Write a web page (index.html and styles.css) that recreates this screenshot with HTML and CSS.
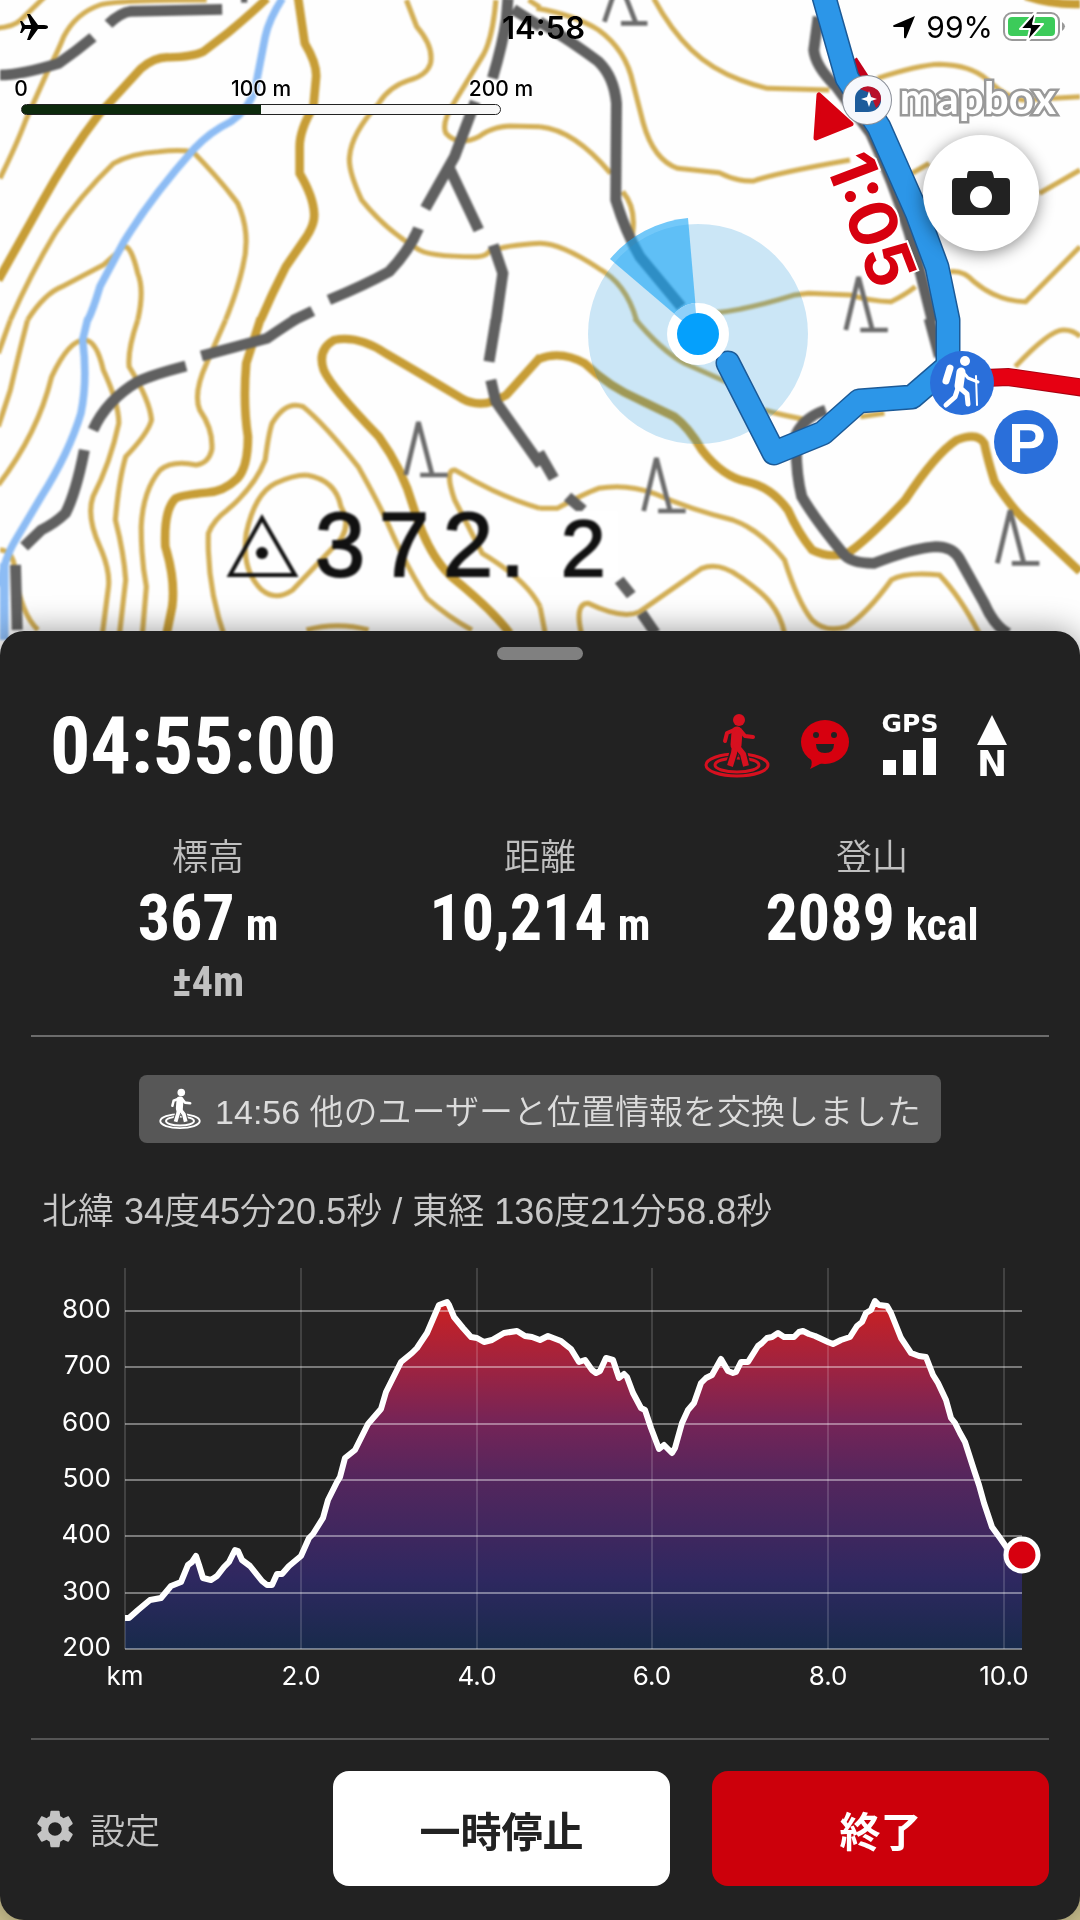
FILE: index.html
```
<!DOCTYPE html>
<html lang="ja">
<head>
    <meta charset="UTF-8">
    <meta name="viewport" content="width=device-width, initial-scale=1.0">
    <title>登山記録</title>
    <link rel="stylesheet" href="styles.css">
</head>
<body>
    <!-- Shared icons -->
    <svg class="defs" width="0" height="0" aria-hidden="true">
        <symbol id="walker" viewBox="0 0 66 64">
            <g fill="none" stroke="currentColor">
                <ellipse cx="33" cy="51" rx="31" ry="11" stroke-width="3"/>
                <ellipse cx="33" cy="51" rx="22" ry="7" stroke-width="3"/>
            </g>
            <g fill="none" stroke="var(--cut)" stroke-linejoin="round" stroke-width="9">
                <path d="M31 32 L30 39 L26 51"/>
                <path d="M33 32 L39 39 L42 51"/>
            </g>
            <circle cx="35" cy="6" r="6" fill="currentColor"/>
            <g fill="none" stroke="currentColor" stroke-linejoin="round">
                <path d="M33 18 L32 31" stroke-width="11" stroke-linecap="round"/>
                <path d="M30 16 L23 19 L21 27" stroke-width="4" stroke-linecap="round"/>
                <path d="M36 16 L41 22 L49 23" stroke-width="4" stroke-linecap="round"/>
                <path d="M31 32 L30 39 L26 52" stroke-width="6"/>
                <path d="M31 30 L39 40 L42 52" stroke-width="6"/>
            </g>
        </symbol>
    </svg>

    <main class="app">
        <section class="map">
            <svg class="map-canvas" viewBox="0 0 1080 660" aria-label="地図">
                <defs>
                    <path id="tree" d="M-37 165 L0 6 L40 165 M5 165 H85"/>
                </defs>

                <g class="tiles">
                    <!-- Tile: top left -->
                    <g transform="scale(.3444 .3333)" fill="none">
                        <path class="contour" d="M-10 85 Q40 80 60 60 L130 -10"/>
                        <path class="contour" d="M0 535 Q50 430 75 360 L140 210 Q170 150 185 110 Q220 40 290 15 Q330 0 600 0"/>
                        <path class="contour bold" d="M-5 840 L120 610 Q200 460 290 340 L410 205 Q450 170 490 172 Q560 170 590 155 L660 100 Q730 40 775 -5"/>
                        <path class="contour" d="M30 960 Q90 820 160 700 Q230 590 330 490 Q380 460 460 455 Q520 448 560 455 Q640 540 690 610 Q730 700 705 800 Q690 870 655 960"/>
                        <path class="contour" d="M80 960 Q130 880 180 860 L300 795 L360 740 Q380 735 400 820 Q420 870 400 960"/>
                        <path class="contour bold" d="M865 -10 L885 130 Q920 190 918 230 L910 320 Q870 390 870 440 L870 520 Q910 590 912 640 Q915 670 890 710 L830 800 Q790 880 757 960"/>
                        <path class="contour" d="M1180 0 L1210 80 Q1260 140 1250 190 Q1240 225 1190 240 Q1130 260 1100 310 Q1020 400 1015 470 Q1010 510 1050 600 Q1120 690 1210 745 Q1240 770 1380 770 Q1410 770 1420 755 Q1470 735 1568 730"/>
                        <path class="contour" d="M1440 0 Q1430 120 1400 170 L1320 305 Q1280 370 1295 400 Q1330 440 1390 410 Q1430 380 1480 378 L1568 380"/>
                        <path class="contour" d="M1535 0 L1568 22"/>
                        <path class="river" d="M820 -5 Q780 60 770 110 L740 270 Q720 330 670 365 Q610 395 565 445 Q440 590 360 725 L290 860 Q270 930 255 960"/>
                        <path class="road" d="M0 225 Q60 225 170 190 Q220 155 270 112 M315 72 Q350 38 380 34 L645 28"/>
                        <path class="road" d="M1475 -5 L1470 60 Q1460 130 1430 235 M1380 305 L1320 470 L1235 625 M1215 685 Q1190 750 1130 815 Q1060 855 955 900 M908 933 L850 962"/>
                        <path class="road" d="M1305 505 L1390 690 M1432 735 L1460 820 L1440 965 M1490 28 L1570 80"/>
                        <path class="road" d="M700 -8 H718"/>
                    </g>

                    <!-- Tile: top right -->
                    <g transform="translate(540 0) scale(.3444 .3333)" fill="none">
                        <path class="contour" d="M-10 25 Q100 45 170 90 Q250 150 270 250 L300 370 Q330 480 400 505 L520 518 Q570 545 620 543 Q680 520 900 480 M1080 520 L1130 490"/>
                        <path class="contour" d="M330 -5 Q380 90 440 150 Q520 230 660 265 L840 270 M980 235 Q1100 195 1160 193 Q1250 195 1300 240 Q1350 290 1400 300 L1568 290"/>
                        <path class="contour" d="M0 380 Q100 390 205 520"/>
                        <path class="contour" d="M240 575 Q285 630 265 720"/>
                        <path class="contour" d="M0 730 Q60 730 170 805 Q250 850 280 960"/>
                        <path class="contour" d="M500 940 Q600 930 740 885 L780 880 L900 885 Q960 905 1020 905 Q1060 885 1090 860 M1190 815 Q1230 810 1260 845 Q1330 905 1410 905 L1568 740"/>
                        <path class="contour" d="M1450 580 L1568 510"/>
                        <path class="contour bold" d="M1410 -12 Q1490 15 1568 12"/>
                        <path class="road" d="M-2 65 Q100 130 170 185 Q215 230 222 310 L220 600 Q250 700 290 770 L410 920"/>
                        <path class="road" d="M808 50 L795 150 Q800 200 860 260 L960 400 Q1050 600 1100 800 L1140 965"/>
                        <path class="symbol" d="M187 65 L215 -20 M245 -20 L278 68 M235 70 H312"/>
                        <use href="#tree" class="symbol" x="925" y="825"/>
                    </g>

                    <!-- Tile: bottom left -->
                    <g transform="translate(0 320) scale(.3444 .3333)" fill="none">
                        <path class="contour" d="M30 0 L-5 100 M80 0 Q50 120 30 210 L-5 320"/>
                        <path class="contour" d="M-5 495 Q110 340 150 170 Q200 60 245 60 Q280 60 300 150 Q345 250 345 310 Q320 430 270 530 Q250 590 290 680 Q320 750 315 800 L295 960"/>
                        <path class="contour" d="M400 0 Q370 90 375 140 Q435 240 440 300 Q430 340 365 410 Q345 480 335 600 Q360 700 365 780 L345 960"/>
                        <path class="contour" d="M655 0 L600 130 Q560 220 580 270 Q620 330 615 390 Q605 430 570 435 Q500 420 465 450 Q415 510 410 620 Q410 720 425 800 L412 960"/>
                        <path class="contour bold" d="M757 -5 L715 130 Q705 250 720 350 Q720 440 690 475 Q650 515 600 518 Q530 525 510 535 Q475 570 480 680 Q510 780 500 860 L480 960"/>
                        <path class="contour" d="M655 960 Q600 800 605 640 Q620 600 660 570 Q740 500 770 420 Q780 340 790 310 Q830 240 880 260 Q940 310 1040 440 Q1100 550 1130 620 Q1190 760 1240 835 Q1300 890 1370 930"/>
                        <path class="contour" d="M890 465 Q975 480 990 560 Q1030 630 960 690 L850 810 Q800 845 760 810 Q700 750 715 640 Q740 520 800 490 Q850 465 890 465"/>
                        <path class="contour bold" d="M1570 110 L1470 225 Q1400 270 1340 235 Q1220 160 1120 100 Q1040 45 970 60 Q920 90 940 150 Q960 200 1100 350 Q1170 450 1200 560 Q1240 700 1310 770 Q1430 870 1480 940"/>
                        <path class="contour" d="M1568 565 Q1450 530 1320 450 Q1290 450 1320 540 Q1370 640 1400 700 Q1530 780 1568 860"/>
                        <path class="contour" d="M890 930 Q980 905 1070 930 M0 690 Q40 690 45 760 Q60 880 110 930"/>
                        <path class="river" d="M255 -5 L240 60 Q255 180 235 280 Q200 400 120 530 L45 660 Q10 720 0 800"/>
                        <path class="river pale" d="M12 730 L12 960"/>
                        <path class="road" d="M858 -2 Q810 30 775 55 L585 108 M540 138 Q440 165 400 185 Q310 240 270 330 M245 390 Q220 520 190 580 Q160 610 120 630 L70 680 M45 735 L50 930"/>
                        <path class="road" d="M1440 0 L1420 125 M1425 180 L1440 245 L1570 435"/>
                        <use href="#tree" class="symbol" x="1215" y="300"/>
                    </g>

                    <!-- Tile: bottom right -->
                    <g transform="translate(540 320) scale(.3444 .3333)" fill="none">
                        <path class="contour" d="M275 -5 Q350 90 420 130 L550 190 M650 270 Q720 290 780 300 M930 290 L1000 280"/>
                        <path class="contour bold" d="M-3 117 Q60 90 130 130 Q200 200 290 240 L390 290 Q430 320 470 390 Q530 470 600 485 Q670 500 720 570 Q750 640 790 690 Q850 720 900 695 Q960 650 1060 540 Q1150 400 1210 360 Q1270 335 1290 370 Q1300 420 1320 485 Q1380 580 1420 610 L1568 755"/>
                        <path class="contour" d="M0 565 L50 565 Q130 520 170 505 Q250 490 330 520 Q440 570 560 600 Q640 630 710 720 Q750 850 790 900 Q830 940 890 920 Q950 880 1020 780 Q1060 755 1160 765 Q1220 830 1275 940"/>
                        <path class="contour" d="M120 940 Q100 850 140 850 Q240 900 290 875 L470 745 Q520 725 580 770 Q650 820 670 850 Q700 890 710 940 M0 860 L15 940"/>
                        <path class="contour" d="M1380 140 Q1480 30 1520 30 Q1550 30 1568 50"/>
                        <path class="road" d="M-3 398 L40 475 M80 530 L125 570 M230 780 L265 825 M295 880 L335 940"/>
                        <path class="road" d="M830 270 Q770 290 745 340 Q740 450 760 530 Q800 600 880 700 Q900 730 970 730 Q1080 685 1150 680 Q1200 680 1220 720 L1290 850 Q1320 920 1360 940 M1130 -5 L1160 110"/>
                        <use href="#tree" class="symbol" x="338" y="408"/>
                        <use href="#tree" class="symbol" x="1365" y="565"/>
                    </g>

                    <!-- Summit -->
                    <path d="M262 518 L230 575 H295 Z" fill="none" stroke="#111" stroke-width="4"/>
                    <circle cx="262" cy="553" r="6" fill="#111"/>
                    <rect x="530" y="511" width="88" height="66" fill="#fff"/>
                    <text class="summit" x="315 379 443 500" y="576">372.</text>
                    <text class="summit small" x="561" y="576">2</text>
                </g>

                <!-- Current position -->
                <circle cx="698" cy="334" r="110" fill="#0087d7" fill-opacity=".2"/>
                <path d="M698 334 L610 259 A116 116 0 0 1 688 218 Z" fill="#1ca6f5" fill-opacity=".62"/>

                <!-- Course and walked track -->
                <path d="M853 60 L866 80" fill="none" stroke="#c1001a" stroke-width="9"/>
                <path d="M985 378 L1008 377 L1085 388" fill="none" stroke="#a90010" stroke-width="18"/>
                <path d="M985 378 L1008 377 L1085 388" fill="none" stroke="#e60012" stroke-width="16"/>
                <path d="M819 95 L816 138 L851 124 Z" fill="#d7000f" stroke="#d7000f" stroke-width="5" stroke-linejoin="round"/>
                <g fill="none" stroke-linejoin="round" stroke-linecap="round">
                    <path stroke="#1c5a97" stroke-width="25" d="M822 -10 L847 78 L879 127 L917 213 L937 267 L948 320 V366 L912 397 L859 401 L823 433 L774 453 L728 363"/>
                    <path stroke="#2c96e8" stroke-width="22" d="M822 -10 L847 78 L879 127 L917 213 L937 267 L948 320 V366 L912 397 L859 401 L823 433 L774 453 L728 363"/>
                </g>
                <text class="course-time" transform="translate(825 164) rotate(69)">1:05</text>
                <circle cx="698" cy="334" r="31" fill="#fff"/>
                <path d="M698 334 L674 314 A31 31 0 0 1 695 303 Z" fill="#8ed0f9"/>
                <circle cx="698" cy="334" r="21" fill="#05a0fc"/>

                <!-- Trailhead and parking -->
                <circle cx="962" cy="383" r="32" fill="#2a6fda"/>
                <g stroke="#fff" fill="none" stroke-linecap="round" stroke-linejoin="round">
                    <circle cx="965" cy="361" r="5" fill="#fff" stroke="none"/>
                    <path d="M950 368 L946 381" stroke-width="7"/>
                    <path d="M961 372 L959 386" stroke-width="9"/>
                    <path d="M958 388 L955 397 L946 405" stroke-width="5"/>
                    <path d="M959 387 L967 394 L968 404" stroke-width="5"/>
                    <path d="M962 371 L968 378 L978 382" stroke-width="3"/>
                    <path d="M976 376 L977 405" stroke-width="2"/>
                </g>
                <circle cx="1026" cy="442" r="32" fill="#2a6fda"/>
                <text class="parking" x="1027" y="462">P</text>
            </svg>

            <div class="map-overlay">
                <header class="status-bar">
                    <svg width="28" height="28" viewBox="0 0 28 28" aria-label="機内モード"><path d="M28 14 Q28 12 24 12 H18 L10 1 H7 L11 12 H5 L2 8 H0 L2 14 L0 20 H2 L5 16 H11 L7 27 H10 L18 16 H24 Q28 16 28 14 Z"/></svg>
                    <time class="clock">14:58</time>
                    <div class="power">
                        <svg width="24" height="24" viewBox="0 0 24 24" aria-label="位置情報"><path d="M23 1 L14 23 Q12 24 12 22 V13 Q12 12 11 12 H2 Q0 11 2 10 Z"/></svg>
                        <span>99%</span>
                        <svg class="battery" width="64" height="32" viewBox="0 0 64 32" aria-label="充電中">
                            <rect x="1" y="2" width="55" height="27" rx="8" fill="#fff" stroke="#999" stroke-width="2"/>
                            <rect x="5" y="6" width="47" height="19" rx="4" fill="#3ccb5a"/>
                            <path d="M59 11 Q65 15 59 20 Z" fill="#999"/>
                            <path d="M33 0 L17 18 H27 L24 31 L40 13 H30 Z" stroke="#fff" stroke-width="2" stroke-linejoin="round"/>
                        </svg>
                    </div>
                </header>

                <div class="map-tools">
                    <div class="scale">
                        <div class="scale-labels"><span>0</span><span>100 m</span><span>200 m</span></div>
                        <div class="scale-bar"></div>
                    </div>
                    <div class="right-tools">
                        <a class="mapbox" href="#">
                            <svg width="50" height="50" viewBox="0 0 50 50" aria-hidden="true">
                                <circle cx="25" cy="25" r="24" fill="#f6f8fc" stroke="#8a8f98" stroke-width="2"/>
                                <path d="M13 37 V25 A12 12 0 0 1 25 12 A13 12 0 0 1 39 24 A13 12 0 0 1 25 37 Z" fill="#1d5c9b"/>
                                <path d="M18 14 A13 12 0 0 1 39 24 Q38 30 34 33 L28 18 Z" fill="#b8112a"/>
                                <path d="M27 16 L29 22 L35 24 L29 26 L27 32 L25 26 L19 24 L25 22 Z" fill="#fff"/>
                            </svg>
                            <span>mapbox</span>
                        </a>
                        <button class="camera" type="button" aria-label="写真を撮る">
                            <svg width="60" height="46" viewBox="0 0 60 46"><path fill="#222" fill-rule="evenodd" d="M18 1 H40 Q42 1 43 8 H55 Q59 8 59 12 V41 Q59 45 55 45 H5 Q1 45 1 41 V12 Q1 8 5 8 H16 Q16 1 18 1 Z M30 16 A11 11 0 1 0 30 38 A11 11 0 1 0 30 16 Z"/></svg>
                        </button>
                    </div>
                </div>
            </div>
        </section>

        <section class="sheet">
            <div class="handle"></div>

            <div class="summary">
                <time class="timer">04:55:00</time>
                <div class="indicators">
                    <svg class="red" width="66" height="64" aria-label="位置交換"><use href="#walker"/></svg>
                    <svg width="58" height="64" viewBox="0 0 58 64" aria-label="コメント">
                        <ellipse cx="29" cy="28" rx="24" ry="22" fill="#d7000f"/>
                        <path d="M13 42 Q18 48 14 55 L28 48 Z" fill="#d7000f"/>
                        <g fill="#222"><circle cx="20" cy="21" r="3"/><circle cx="38" cy="21" r="3"/><path d="M20 30 H38 Q38 39 29 39 Q20 39 20 30 Z"/></g>
                    </svg>
                    <svg width="60" height="64" viewBox="0 0 60 64" fill="#fff">
                        <text class="gps" x="30" y="18">GPS</text>
                        <path d="M3 46 H16 V61 H3 Z M23 36 H36 V61 H23 Z M43 24 H56 V61 H43 Z"/>
                    </svg>
                    <svg width="44" height="64" viewBox="0 0 44 64" fill="#fff">
                        <path d="M26 1 L41 31 H11 Z"/>
                        <text class="north" x="26" y="62">N</text>
                    </svg>
                </div>
            </div>

            <div class="stats">
                <div class="stat">
                    <span class="label">標高</span>
                    <strong>367<small>m</small></strong>
                    <span class="accuracy">±4m</span>
                </div>
                <div class="stat">
                    <span class="label">距離</span>
                    <strong>10,214<small>m</small></strong>
                </div>
                <div class="stat">
                    <span class="label">登山</span>
                    <strong>2089<small>kcal</small></strong>
                </div>
            </div>

            <div class="notice">
                <svg width="42" height="42" aria-hidden="true"><use href="#walker"/></svg>
                <span>14:56 他のユーザーと位置情報を交換しました</span>
            </div>

            <p class="coords">北緯 34度45分20.5秒 / 東経 136度21分58.8秒</p>

            <svg class="chart" viewBox="0 0 1080 440" aria-label="標高グラフ">
                <defs>
                    <linearGradient id="elevation" gradientUnits="userSpaceOnUse" x1="0" y1="40" x2="0" y2="389">
                        <stop offset="0" stop-color="#cc2020"/>
                        <stop offset=".19" stop-color="#9f2340"/>
                        <stop offset=".35" stop-color="#752457"/>
                        <stop offset=".51" stop-color="#54265d"/>
                        <stop offset=".8" stop-color="#2e2860"/>
                        <stop offset="1" stop-color="#182a4b"/>
                    </linearGradient>
                    <path id="profile" d="M110 400 V358 L129 358 L138 350 L150 340 L161 338 L171 326 L181 322 L188 305 L192 302 L196 296 L199 305 L203 318 L211 320 L217 316 L224 307 L229 302 L235 290 L238 291 L242 300 L250 306 L262 321 L267 325 L272 325 L277 314 L282 314 L289 306 L301 296 L309 278 L313 274 L323 258 L328 240 L337 222 L340 217 L345 198 L355 190 L368 164 L381 149 L386 132 L401 102 L412 93 L417 88 L427 73 L439 45 L447 42 L449 45 L454 57 L463 68 L471 77 L477 78 L484 82 L492 80 L504 73 L517 71 L525 76 L532 77 L540 80 L548 76 L561 81 L571 89 L579 102 L585 100 L592 110 L596 113 L600 111 L606 98 L613 100 L619 118 L624 114 L627 117 L633 133 L641 148 L645 150 L651 168 L659 189 L664 185 L672 193 L675 188 L682 163 L688 150 L694 143 L701 123 L706 118 L712 115 L721 99 L728 111 L733 113 L736 112 L741 102 L748 102 L758 86 L762 83 L767 78 L772 77 L778 73 L784 77 L794 77 L799 72 L803 71 L809 74 L815 76 L828 82 L833 84 L841 80 L850 77 L857 66 L862 62 L866 53 L871 50 L875 41 L879 45 L887 46 L891 53 L901 78 L911 93 L919 96 L926 97 L933 115 L938 123 L946 140 L951 158 L955 163 L960 173 L965 182 L974 210 L979 225 L984 243 L992 267 L1000 278 L1007 288 L1022 295 V400 Z"/>
                    <clipPath id="plot"><rect x="125" y="0" width="897" height="389"/></clipPath>
                    <clipPath id="plot-line"><rect x="125" y="0" width="893" height="389"/></clipPath>
                </defs>
                <use href="#profile" fill="url(#elevation)" clip-path="url(#plot)"/>
                <path class="grid-x" d="M125 8 V389 M301 8 V389 M477 8 V389 M652 8 V389 M828 8 V389 M1004 8 V389"/>
                <path class="grid-y" d="M125 51 H1022 M125 107 H1022 M125 164 H1022 M125 220 H1022 M125 276 H1022 M125 333 H1022 M125 389 H1022"/>
                <use href="#profile" class="profile" clip-path="url(#plot-line)"/>
                <circle cx="1022" cy="295" r="16" fill="#d7000f" stroke="#fff" stroke-width="5"/>
                <g class="axis axis-y">
                    <text x="111" y="58">800</text>
                    <text x="111" y="114">700</text>
                    <text x="111" y="171">600</text>
                    <text x="111" y="227">500</text>
                    <text x="111" y="283">400</text>
                    <text x="111" y="340">300</text>
                    <text x="111" y="396">200</text>
                </g>
                <g class="axis axis-x">
                    <text x="125" y="425">km</text>
                    <text x="301" y="425">2.0</text>
                    <text x="477" y="425">4.0</text>
                    <text x="652" y="425">6.0</text>
                    <text x="828" y="425">8.0</text>
                    <text x="1004" y="425">10.0</text>
                </g>
            </svg>

            <footer class="actions">
                <button class="settings" type="button">
                    <svg width="38" height="38" viewBox="2 2 20 20" aria-hidden="true"><path fill="currentColor" d="M19.14 12.94c.04-.3.06-.61.06-.94s-.02-.64-.07-.94l2.03-1.58c.18-.14.23-.41.12-.61l-1.92-3.32c-.12-.22-.37-.29-.59-.22l-2.39.96c-.5-.38-1.03-.7-1.62-.94l-.36-2.54c-.04-.24-.24-.41-.48-.41h-3.84c-.24 0-.43.17-.47.41l-.36 2.54c-.59.24-1.13.57-1.62.94l-2.39-.96c-.22-.08-.47 0-.59.22L2.74 8.87c-.12.21-.08.47.12.61l2.03 1.58c-.05.3-.09.63-.09.94s.02.64.07.94l-2.03 1.58c-.18.14-.23.41-.12.61l1.92 3.32c.12.22.37.29.59.22l2.39-.96c.5.38 1.03.7 1.62.94l.36 2.54c.05.24.24.41.48.41h3.84c.24 0 .44-.17.47-.41l.36-2.54c.59-.24 1.13-.56 1.62-.94l2.39.96c.22.08.47 0 .59-.22l1.92-3.32c.12-.22.07-.47-.12-.61l-2.01-1.58zM12 15.6a3.6 3.6 0 1 1 0-7.2 3.6 3.6 0 0 1 0 7.2z"/></svg>
                    設定
                </button>
                <button class="btn pause" type="button">一時停止</button>
                <button class="btn stop" type="button">終了</button>
            </footer>
        </section>
    </main>
</body>
</html>
```
FILE: styles.css
```
* {
    box-sizing: border-box;
}
body {
    margin: 0;
    background-color: #cfc491;
    font-family: "Liberation Sans", "Noto Sans CJK JP", sans-serif;
}
button {
    border: none;
    padding: 0;
    font-family: inherit;
    cursor: pointer;
}
.defs {
    position: absolute;
}
.app {
    min-height: 100vh;
    display: flex;
    flex-direction: column;
}

/* Map */
.map {
    position: relative;
    margin-bottom: -29px;
    background-color: #fefefe;
}
.map-canvas {
    display: block;
    width: 100%;
    height: auto;
}
/* enlarged raster tiles look slightly soft */
.tiles {
    filter: blur(1px);
}
.contour {
    stroke: #d2ae55;
    stroke-width: 15;
}
.contour.bold {
    stroke: #c79d36;
    stroke-width: 25;
}
.river {
    stroke: #8dbcf4;
    stroke-width: 22;
}
.river.pale {
    stroke-width: 26;
}
.road {
    stroke: #606060;
    stroke-width: 32;
}
.symbol {
    stroke: #6c6c6c;
    stroke-width: 14;
}
.summit {
    font-family: "Liberation Sans", sans-serif;
    font-size: 90px;
    fill: #111;
    stroke: #111;
    stroke-width: 2;
}
.summit.small {
    font-size: 80px;
}
.course-time {
    font-family: Inter, sans-serif;
    font-size: 66px;
    font-weight: 700;
    fill: #d7000f;
    stroke: #fff;
    stroke-width: 4;
    paint-order: stroke;
}
.parking {
    font-size: 56px;
    font-weight: bold;
    fill: #fff;
    text-anchor: middle;
}

.map-overlay {
    position: absolute;
    top: 0;
    left: 0;
    right: 0;
    font-family: Inter, sans-serif;
}
.status-bar {
    display: grid;
    grid-template-columns: 1fr auto 1fr;
    align-items: center;
    height: 54px;
    padding: 0 13px 0 20px;
    font-size: 30px;
    color: #000;
}
.clock {
    font-size: 31px;
    font-weight: 600;
}
.power {
    display: flex;
    justify-content: flex-end;
    align-items: center;
    gap: 10px;
}
.map-tools {
    display: flex;
    justify-content: space-between;
    align-items: flex-start;
    padding: 21px 20px 0 21px;
}
.scale {
    width: 480px;
    font-size: 21px;
    font-weight: 500;
    line-height: 28px;
}
.scale-labels {
    display: grid;
    grid-template-columns: repeat(3, 1fr);
    margin: 0 -120px;
    padding-bottom: 1px;
    text-align: center;
    text-shadow: 0 0 2px #fff, 0 0 2px #fff, 0 0 3px #fff;
}
.scale-bar {
    height: 11px;
    border: 1px solid #222;
    border-radius: 6px;
    background: linear-gradient(to right, #0d2a0d 50%, #f8f8f8 50%);
}
.right-tools {
    display: flex;
    flex-direction: column;
    align-items: flex-end;
    gap: 10px;
}
.mapbox {
    display: flex;
    align-items: center;
    gap: 8px;
    padding-right: 4px;
    color: #fff;
    font-family: Lato, sans-serif;
    font-size: 44px;
    font-weight: bold;
    line-height: 44px;
    text-decoration: none;
    -webkit-text-stroke: 5px #999;
    paint-order: stroke;
}
.mapbox span {
    padding-bottom: 6px;
}
.camera {
    display: flex;
    align-items: center;
    justify-content: center;
    width: 116px;
    height: 116px;
    border-radius: 50%;
    margin-right: 21px;
    background-color: #fff;
    box-shadow: 0 3px 16px rgba(0, 0, 0, 0.45);
}

/* Bottom sheet */
.sheet {
    --cut: #222;
    position: relative;
    flex: 1;
    padding-top: 16px;
    border-radius: 24px;
    background-color: #222;
    box-shadow: 0 0 32px rgba(0, 0, 0, 0.4);
    color: #fff;
}
.handle {
    width: 86px;
    height: 13px;
    margin: 0 auto;
    border-radius: 7px;
    background-color: #808080;
}
.summary {
    display: flex;
    justify-content: space-between;
    align-items: center;
    height: 64px;
    margin-top: 54px;
    padding: 0 70px 0 50px;
}
.timer,
.stat strong,
.accuracy {
    font-family: "Roboto Condensed", "Liberation Sans Narrow", "Liberation Sans", sans-serif;
    font-weight: bold;
}
.timer {
    font-size: 80px;
    line-height: 64px;
}
.indicators {
    display: flex;
    gap: 26px;
}
.indicators svg {
    overflow: visible;
}
.red {
    color: #d7101f;
}
.gps {
    font-family: "DejaVu Sans", sans-serif;
    font-size: 25px;
    font-weight: bold;
    text-anchor: middle;
}
.north {
    font-family: "DejaVu Sans", sans-serif;
    font-size: 36px;
    font-weight: bold;
    text-anchor: middle;
}
.stats {
    display: grid;
    grid-template-columns: repeat(3, 1fr);
    height: 200px;
    margin: 59px 31px 0;
    padding: 0 11px;
    border-bottom: 2px solid #6c6c6c;
}
.stat {
    display: flex;
    flex-direction: column;
    align-items: center;
}
.label {
    font-size: 36px;
    font-weight: 350;
    line-height: 42px;
    color: #c0c0c0;
}
.stat strong {
    display: flex;
    align-items: baseline;
    gap: 11px;
    font-size: 64px;
    line-height: 80px;
    white-space: nowrap;
}
.stat small {
    font-size: 44px;
}
.accuracy {
    font-size: 42px;
    line-height: 34px;
    color: #c0c0c0;
}
.notice {
    --cut: #575757;
    display: flex;
    align-items: center;
    justify-content: center;
    gap: 14px;
    width: fit-content;
    height: 68px;
    margin: 38px auto 0;
    padding: 0 20px;
    border-radius: 8px;
    background-color: #575757;
    font-size: 34px;
    font-weight: 350;
}
.notice span {
    color: #dcdcdc;
}
.coords {
    margin: 46px 42px 0;
    font-size: 36px;
    font-weight: 350;
    line-height: 46px;
    color: #c8c8c8;
}
.chart {
    display: block;
    width: 100%;
    height: auto;
    margin-top: 25px;
}
.grid-x {
    stroke: #fff;
    stroke-opacity: 0.15;
    stroke-width: 2;
}
.grid-y {
    stroke: #fff;
    stroke-opacity: 0.4;
    stroke-width: 2;
}
.profile {
    fill: none;
    stroke: #fff;
    stroke-width: 6;
    stroke-linejoin: round;
}
.axis {
    font-family: Inter, sans-serif;
    font-size: 26px;
    fill: #fff;
}
.axis-y {
    text-anchor: end;
}
.axis-x {
    text-anchor: middle;
}
.actions {
    display: grid;
    grid-template-columns: 260px 1fr 1fr;
    gap: 42px;
    margin: 38px 31px 0;
    padding: 31px 0 34px;
    border-top: 2px solid #555;
}
.settings {
    display: flex;
    align-items: center;
    gap: 16px;
    padding-left: 5px;
    background: none;
    color: #c4c4c4;
    font-size: 35px;
    font-weight: 350;
}
.btn {
    height: 115px;
    border-radius: 16px;
    font-size: 41px;
    font-weight: bold;
}
.pause {
    background-color: #fff;
    color: #222;
}
.stop {
    background-color: #cc000b;
    color: #fff;
}
```
